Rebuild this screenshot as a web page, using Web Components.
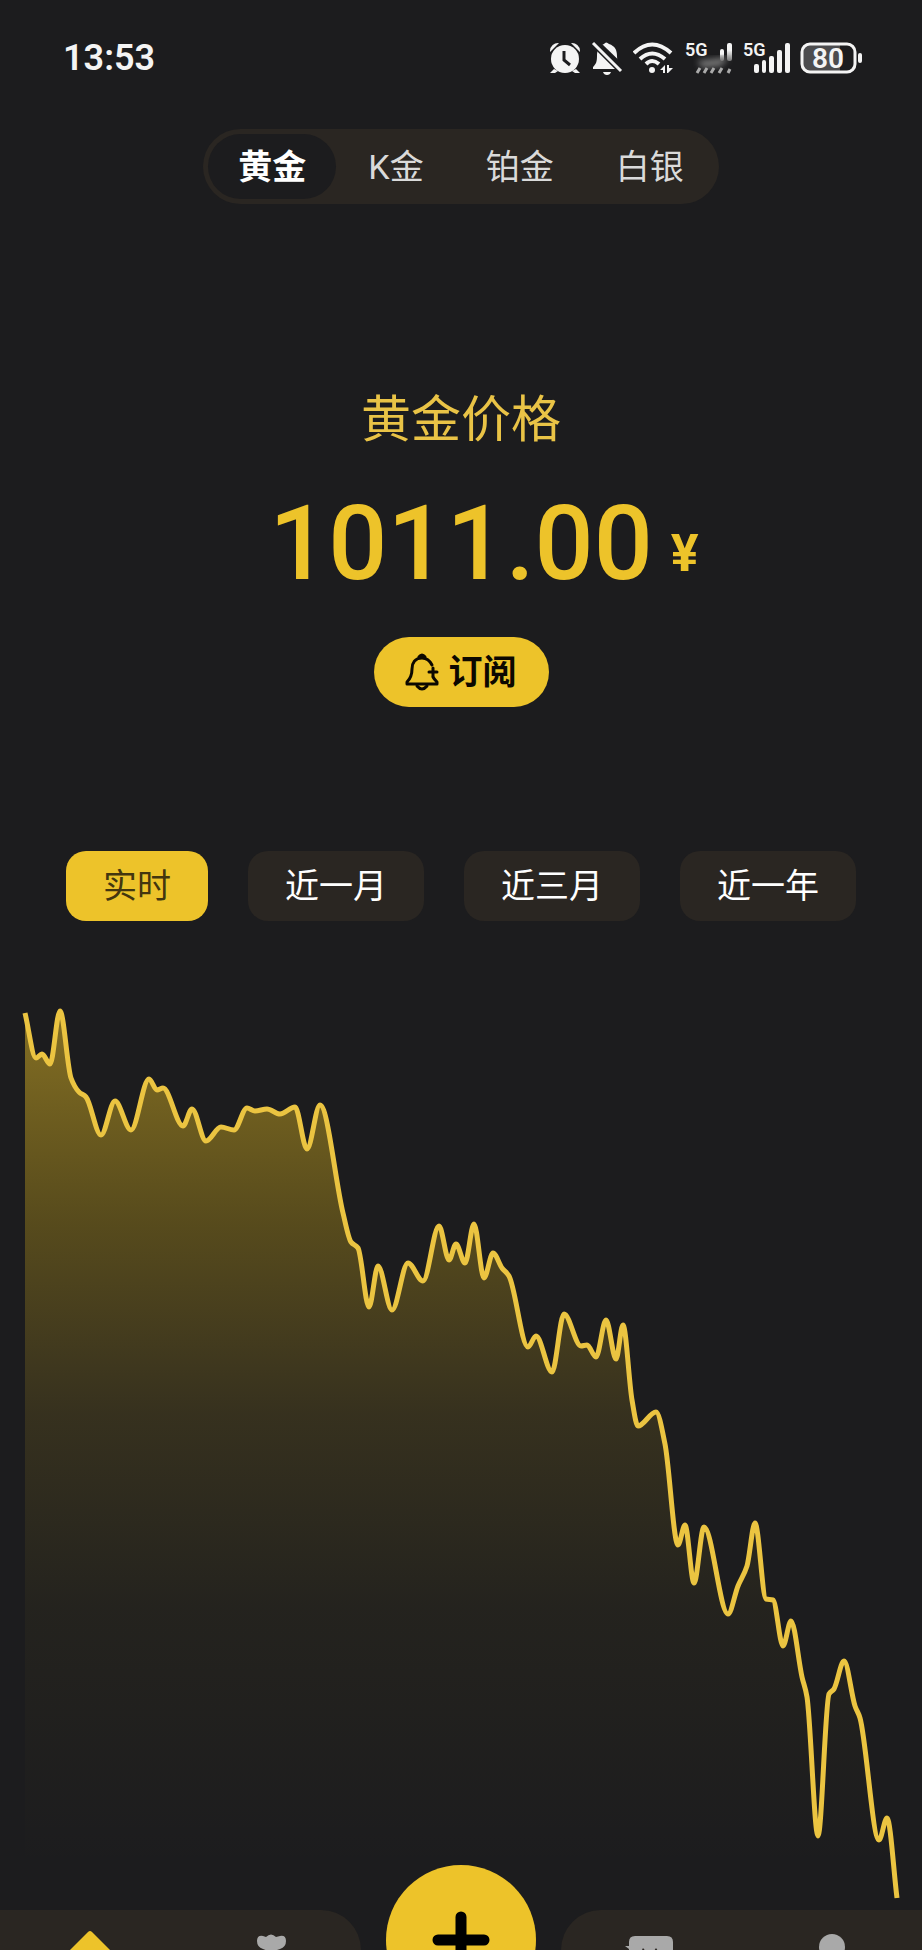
<!DOCTYPE html>
<html lang="zh-CN">
<head>
<meta charset="UTF-8">
<meta name="viewport" content="width=device-width, initial-scale=1">
<title>黄金价格</title>
<style>
  :root {
    --bg: #1c1c1e;
    --panel: #2a2622;
    --gold: #edc32a;
    --muted: #a9a9a9;
  }
  body {
    margin: 0;
    height: 100vh;
    overflow: hidden;
    background: var(--bg);
    color: #fff;
    font-family: Roboto, "Noto Sans CJK SC", sans-serif;
  }
</style>
</head>
<body>
<gold-app></gold-app>

<script>
/** Phone status bar: clock on the left, system icons on the right. */
class StatusBar extends HTMLElement {
  constructor() {
    super();
    this.attachShadow({ mode: "open" });
  }

  connectedCallback() {
    this.shadowRoot.innerHTML = `
      <style>
        :host {
          display: flex;
          justify-content: space-between;
          align-items: center;
          height: 112px;
          padding: 2px 58px 0 63px;
          color: #f4f4f4;
        }
        time {
          font-size: 36px;
          font-weight: 600;
          line-height: 40px;
        }
        .icons {
          display: flex;
          align-items: center;
          gap: 9px;
        }
        svg {
          display: block;
          fill: currentColor;
        }
        text {
          font-weight: 600;
        }
      </style>
      <time><slot></slot></time>
      <div class="icons">
        <svg width="32" height="32" viewBox="0 0 32 32" aria-label="闹钟">
          <path d="M1 9a8 8 0 0 1 9-8L1 10zM31 9a8 8 0 0 0-9-8l9 9z"/>
          <path d="M5 27l-4 4h5l3-2zM27 27l4 4h-5l-3-2z"/>
          <circle cx="16" cy="17" r="14"/>
          <path d="M15 9v9l6 5" fill="none" stroke="#1c1c1e" stroke-width="3"/>
        </svg>
        <svg width="34" height="34" viewBox="-1 0 34 34" aria-label="静音">
          <path d="M13 3q2-3 5 0c6 2 8 6 8 12 0 5 1 8 4 11v2H2v-2c3-3 4-5 4-11C6 9 8 5 13 3z"/>
          <path d="M12 31h8q-1 3-4 3t-4-3z"/>
          <path d="M4 -1l29 28" stroke="#1c1c1e" stroke-width="4"/>
          <path d="M2 2l28 28" stroke="#1c1c1e" stroke-width="6"/>
          <path d="M2 2l28 28" stroke="#f4f4f4" stroke-width="3"/>
        </svg>
        <svg width="42" height="32" viewBox="0 0 42 32" aria-label="Wi-Fi">
          <g fill="none" stroke="currentColor" stroke-width="4">
            <path d="M1 11Q19-6 38 11"/>
            <path d="M7 17q12-11 25 0"/>
            <path d="M13 22q6-6 13 0"/>
          </g>
          <circle cx="19" cy="28" r="3"/>
          <path d="M27 28l5-5v8h-2v-3zM34 31v-8h2v3h4l-5 5z"/>
        </svg>
        <svg width="49" height="40" viewBox="-1 -3 49 40" aria-label="信号">
          <defs>
            <linearGradient id="fade" x1="0" y1="0" x2="0" y2="1">
              <stop offset="0.4" stop-color="#f4f4f4"/>
              <stop offset="1" stop-color="#777"/>
            </linearGradient>
            <filter id="soft"><feGaussianBlur stdDeviation="3"/></filter>
          </defs>
          <text x="0" y="15" font-size="18">5G</text>
          <rect x="35" y="8" width="4" height="12" rx="2" fill="url(#fade)"/>
          <rect x="42" y="2" width="5" height="18" rx="2" fill="url(#fade)"/>
          <path d="M12 20l32-4-8 9-18 2z" fill="#777" filter="url(#soft)"/>
          <path d="M12 32l3-5M19 32l3-5M26 32l3-5M34 32l3-5M43 32l2-4" stroke="#aaa" stroke-width="3"/>
        </svg>
        <svg width="49" height="40" viewBox="-1 -3 49 40" aria-label="信号">
          <text x="0" y="15" font-size="18">5G</text>
          <rect x="11" y="23" width="5" height="9" rx="2"/>
          <rect x="19" y="19" width="4" height="13" rx="2"/>
          <rect x="26" y="15" width="5" height="17" rx="2"/>
          <rect x="34" y="9" width="5" height="23" rx="2"/>
          <rect x="42" y="2" width="5" height="30" rx="2"/>
        </svg>
        <svg width="64" height="32" viewBox="0 0 64 32" aria-label="电量">
          <path d="M10 3h30v26H10q-7 0-7-7V10q0-7 7-7z" fill="#4c4c4e"/>
          <rect x="2" y="2" width="53" height="28" rx="8" fill="none" stroke="currentColor" stroke-width="3"/>
          <rect x="58" y="11" width="4" height="10" rx="2"/>
          <text x="28" y="26" font-size="28" text-anchor="middle">80</text>
        </svg>
      </div>
    `;
  }
}

/** Pill-shaped switch between the metals. */
class MetalTabs extends HTMLElement {
  constructor() {
    super();
    this.attachShadow({ mode: "open" });
  }

  connectedCallback() {
    const items = this.getAttribute("items").split(",");
    this.shadowRoot.innerHTML = `
      <style>
        :host {
          display: flex;
          justify-content: center;
        }
        nav {
          display: flex;
          gap: 2px;
          padding: 5px;
          border-radius: 38px;
          background: var(--panel);
        }
        button {
          height: 65px;
          padding: 0 30px;
          border: 0;
          border-radius: 33px;
          background: none;
          color: #dadada;
          font: inherit;
          font-size: 34px;
          line-height: 40px;
          cursor: pointer;
        }
        button[aria-pressed="true"] {
          background: var(--bg);
          color: #fff;
          font-weight: 700;
        }
      </style>
      <nav>
        ${items.map((item, i) => `<button aria-pressed="${i === 0}">${item}</button>`).join("")}
      </nav>
    `;
  }
}

/** Current price with its title and the subscribe button. */
class PriceHero extends HTMLElement {
  constructor() {
    super();
    this.attachShadow({ mode: "open" });
  }

  connectedCallback() {
    this.shadowRoot.innerHTML = `
      <style>
        :host {
          display: flex;
          flex-direction: column;
          align-items: center;
          color: var(--gold);
        }
        h1 {
          margin: 0;
          color: #e9c346;
          font-size: 50px;
          font-weight: 400;
          line-height: 60px;
        }
        .price {
          display: grid;
          grid-template-columns: 1fr auto 1fr;
          align-items: center;
          align-self: stretch;
          margin: 32px 0 31px;
          line-height: 124px;
        }
        .value {
          grid-column: 2;
          font-size: 104px;
          font-weight: 500;
        }
        .unit {
          padding: 20px 0 0 18px;
          font-size: 52px;
          font-weight: 700;
          line-height: 60px;
        }
        button {
          display: flex;
          align-items: center;
          gap: 10px;
          height: 70px;
          padding: 0 32px 0 31px;
          border: 0;
          border-radius: 35px;
          background: var(--gold);
          color: #0c0800;
          font: inherit;
          font-size: 34px;
          font-weight: 600;
          line-height: 40px;
          cursor: pointer;
        }
      </style>
      <h1><slot></slot></h1>
      <div class="price">
        <span class="value">${this.getAttribute("value")}</span>
        <span class="unit">¥</span>
      </div>
      <button>
        <svg width="34" height="38" viewBox="0 0 34 38" fill="none" stroke="currentColor" stroke-width="3" stroke-linecap="round" stroke-linejoin="round">
          <path d="M27 12C25 8 22 5 17 5 10 5 7 10 7 16c0 6-1 9-5 13v2h30v-2c-2-2-3-3-4-5"/>
          <path d="M14 4q3-4 6 0z" fill="currentColor"/>
          <path d="M12 33q5 6 10 0"/>
          <path d="M28 15v8M24 19h8"/>
        </svg>
        订阅
      </button>
    `;
  }
}

/** Row of buttons that pick the period of the chart. */
class RangeTabs extends HTMLElement {
  constructor() {
    super();
    this.attachShadow({ mode: "open" });
  }

  connectedCallback() {
    const items = this.getAttribute("items").split(",");
    this.shadowRoot.innerHTML = `
      <style>
        :host {
          display: flex;
          justify-content: center;
          gap: 40px;
        }
        button {
          height: 70px;
          padding: 0 37px;
          border: 0;
          border-radius: 20px;
          background: var(--panel);
          color: #fff;
          font: inherit;
          font-size: 34px;
          line-height: 40px;
          cursor: pointer;
        }
        button[aria-pressed="true"] {
          background: var(--gold);
          color: #43360f;
        }
      </style>
      ${items.map((item, i) => `<button aria-pressed="${i === 0}">${item}</button>`).join("")}
    `;
  }
}

// Turning points of the curve, in viewBox units
const TREND = [
  [25, 33], [36, 78], [42, 74], [50, 84], [60, 31], [71, 98], [79, 112], [86, 117],
  [101, 155], [115, 121], [131, 150], [149, 99], [157, 110], [163, 108], [183, 146],
  [192, 129], [206, 161], [221, 147], [234, 150], [247, 128], [255, 131], [267, 129],
  [280, 134], [295, 127], [307, 169], [320, 125], [343, 233], [351, 262], [358, 268],
  [369, 327], [378, 286], [392, 330], [408, 283], [423, 301], [439, 246], [449, 280],
  [456, 264], [465, 283], [474, 244], [484, 298], [493, 273], [502, 288], [509, 296],
  [528, 367], [536, 356], [552, 392], [564, 334], [581, 366], [587, 365], [596, 377],
  [606, 340], [616, 379], [623, 345], [632, 420], [638, 446], [656, 432], [665, 464],
  [678, 565], [685, 545], [694, 603], [704, 547], [728, 634], [738, 606], [747, 586],
  [755, 543], [766, 619], [773, 620], [783, 666], [791, 641], [802, 697], [807, 717],
  [818, 856], [829, 714], [834, 709], [844, 681], [855, 726], [860, 738], [879, 860],
  [887, 838], [897, 918],
];

/**
 * Builds a smooth path that never overshoots its points (monotone cubic).
 *
 * @param {number[][]} pts - Points sorted by x.
 * @return {string} Path data.
 */
function smoothPath(pts) {
  const slope = [];
  for (let i = 0; i < pts.length - 1; i++) {
    slope.push((pts[i + 1][1] - pts[i][1]) / (pts[i + 1][0] - pts[i][0]));
  }
  const tan = pts.map((_, i) => {
    if (i === 0) return slope[0];
    if (i === pts.length - 1) return slope[i - 1];
    const a = slope[i - 1];
    const b = slope[i];
    return a * b <= 0 ? 0 : (2 * a * b) / (a + b);
  });
  let d = `M${pts[0][0]} ${pts[0][1]}`;
  for (let i = 0; i < pts.length - 1; i++) {
    const [x0, y0] = pts[i];
    const [x1, y1] = pts[i + 1];
    const h = (x1 - x0) / 3;
    d += `C${x0 + h} ${y0 + tan[i] * h} ${x1 - h} ${y1 - tan[i + 1] * h} ${x1} ${y1}`;
  }
  return d;
}

/** Area chart of the price. */
class TrendChart extends HTMLElement {
  constructor() {
    super();
    this.attachShadow({ mode: "open" });
  }

  connectedCallback() {
    const line = smoothPath(TREND);
    this.shadowRoot.innerHTML = `
      <style>
        :host {
          display: block;
        }
        svg {
          display: block;
          width: 100%;
        }
      </style>
      <svg viewBox="0 0 922 930" role="img" aria-label="价格走势">
        <defs>
          <linearGradient id="area" gradientUnits="userSpaceOnUse" x1="0" y1="30" x2="0" y2="890">
            <stop offset="0" stop-color="#edc32a" stop-opacity="0.5"/>
            <stop offset="0.25" stop-color="#e6bc18" stop-opacity="0.29"/>
            <stop offset="0.47" stop-color="#e6bc20" stop-opacity="0.13"/>
            <stop offset="0.7" stop-color="#e0c020" stop-opacity="0.04"/>
            <stop offset="1" stop-color="#e0c020" stop-opacity="0"/>
          </linearGradient>
        </defs>
        <path d="${line}V918H25Z" fill="url(#area)"/>
        <path d="${line}" fill="none" stroke="#ebc441" stroke-width="5" stroke-linejoin="round"/>
      </svg>
    `;
  }
}

/** Bottom navigation, two panels with the round add button between them. */
class BottomBar extends HTMLElement {
  constructor() {
    super();
    this.attachShadow({ mode: "open" });
  }

  connectedCallback() {
    this.shadowRoot.innerHTML = `
      <style>
        :host {
          display: grid;
          grid-template-columns: 1fr 150px 1fr;
          gap: 25px;
          align-items: start;
        }
        nav {
          display: grid;
          grid-template-columns: 1fr 1fr;
          justify-items: center;
          padding-top: 21px;
          height: 100px;
          background: var(--panel);
          color: var(--muted);
        }
        .left {
          border-radius: 0 40px 0 0;
        }
        .right {
          border-radius: 40px 0 0 0;
        }
        a {
          color: inherit;
        }
        a.active {
          color: var(--gold);
        }
        svg {
          display: block;
          fill: currentColor;
        }
        button {
          display: grid;
          place-items: center;
          height: 150px;
          margin-top: -45px;
          padding: 0;
          border: 0;
          border-radius: 50%;
          background: var(--gold);
          color: #000;
          cursor: pointer;
        }
      </style>
      <nav class="left">
        <a class="active" href="#home" aria-label="首页">
          <svg width="60" height="60" viewBox="0 0 60 60"><path d="M28 1q2-2 4 0l27 27q2 2 0 4L32 59q-2 2-4 0L1 32q-2-2 0-4z"/></svg>
        </a>
        <a href="#shop" aria-label="商城">
          <svg width="60" height="60" viewBox="0 0 60 60"><path d="M16 10q0-6 6-5l3 1q5-5 10 0l4-1q6-1 6 5 0 6-6 8l-6 2v22h-6V20l-5-2q-6-2-6-8z"/></svg>
        </a>
      </nav>
      <button aria-label="添加">
        <svg width="58" height="58" viewBox="0 0 58 58"><path d="M29 6v46M6 29h46" stroke="currentColor" stroke-width="11" stroke-linecap="round"/></svg>
      </button>
      <nav class="right">
        <a href="#news" aria-label="消息">
          <svg width="60" height="60" viewBox="0 0 60 60"><path fill-rule="evenodd" d="M14 5h32q6 0 6 6v30q0 6-6 6H14q-6 0-6-6V18l-4-3h4v-4q0-6 6-6zM22 17l5 6h-8zM35 17l4 6h-8z"/></svg>
        </a>
        <a href="#me" aria-label="我的">
          <svg width="60" height="60" viewBox="0 0 60 60"><circle cx="30" cy="16" r="13"/><path d="M6 56q0-24 24-24t24 24z"/></svg>
        </a>
      </nav>
    `;
  }
}

/** The whole screen. */
class GoldApp extends HTMLElement {
  constructor() {
    super();
    this.attachShadow({ mode: "open" });
  }

  connectedCallback() {
    this.shadowRoot.innerHTML = `
      <style>
        :host {
          display: block;
        }
        metal-tabs {
          padding-top: 15px;
        }
        price-hero {
          padding-top: 186px;
        }
        range-tabs {
          padding-top: 144px;
        }
        trend-chart {
          padding-top: 59px;
        }
      </style>
      <status-bar>13:53</status-bar>
      <main>
        <metal-tabs items="黄金,K金,铂金,白银"></metal-tabs>
        <price-hero value="1011.00">黄金价格</price-hero>
        <range-tabs items="实时,近一月,近三月,近一年"></range-tabs>
        <trend-chart></trend-chart>
      </main>
      <bottom-bar></bottom-bar>
    `;
  }
}

customElements.define("status-bar", StatusBar);
customElements.define("metal-tabs", MetalTabs);
customElements.define("price-hero", PriceHero);
customElements.define("range-tabs", RangeTabs);
customElements.define("trend-chart", TrendChart);
customElements.define("bottom-bar", BottomBar);
customElements.define("gold-app", GoldApp);
</script>
</body>
</html>
